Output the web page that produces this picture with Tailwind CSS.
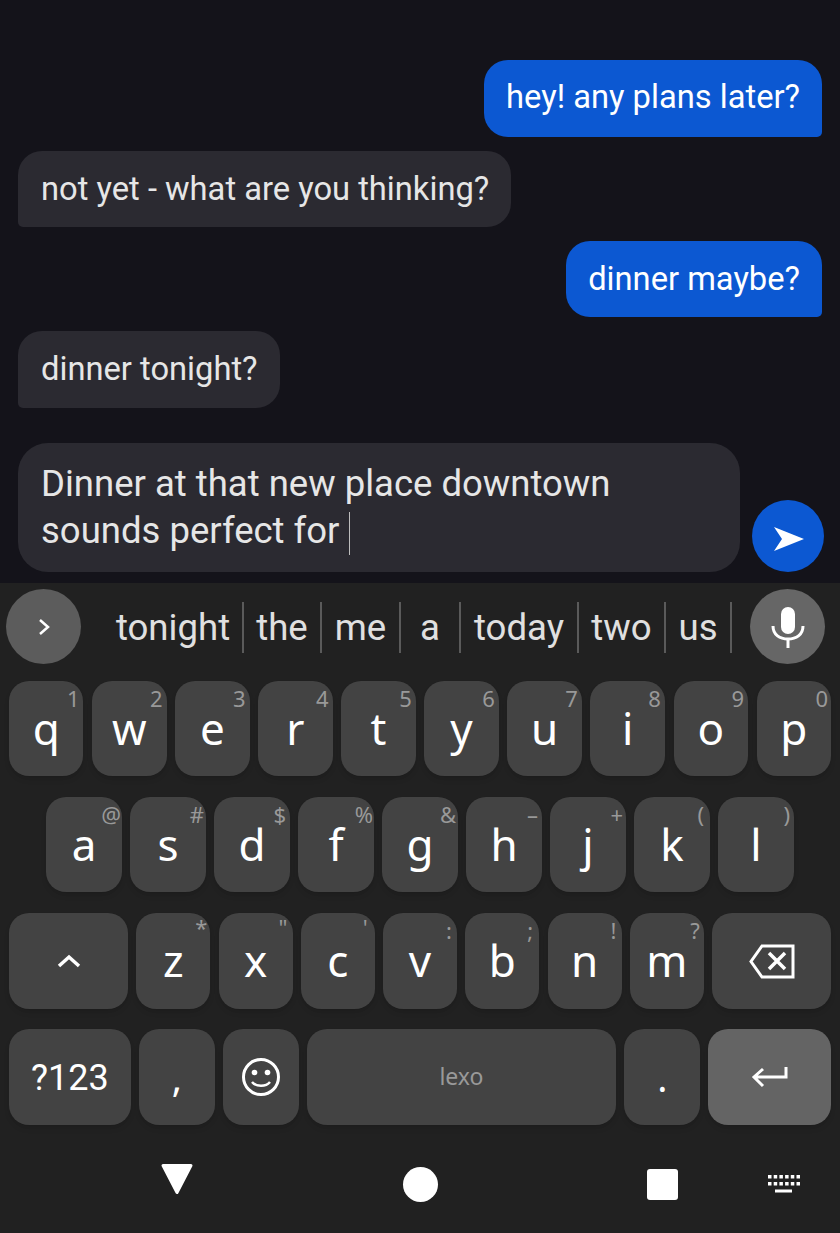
<!DOCTYPE html>
<html lang="en">
  <head>
    <meta charset="UTF-8" />
    <title>Chat</title>
    <script src="https://cdn.jsdelivr.net/npm/@tailwindcss/browser@4"></script>
  </head>
  <body class="bg-[#14131a] font-['Roboto',sans-serif] overflow-hidden">
    <div class="w-[840px] h-[1233px] flex flex-col">
      <!-- Messages -->
      <main class="h-[583px] flex flex-col pl-[18px] pr-[16px] pt-[60px]">
        <div class="flex flex-col gap-[14px] pr-[2px]">
          <div class="self-end h-[77px] flex items-center px-[22px] pb-[1px] rounded-[24px] rounded-br-[5px] bg-[#0c58d2] text-white text-[32.7px]">hey! any plans later?</div>
          <div class="self-start h-[76px] flex items-center pl-[23px] pr-[22px] pt-[1px] rounded-[24px] rounded-bl-[5px] bg-[#2b2a31] text-[#e6e6e6] text-[32.7px]">not yet - what are you thinking?</div>
          <div class="self-end h-[76px] flex items-center px-[22px] pt-[1px] rounded-[24px] rounded-br-[5px] bg-[#0c58d2] text-white text-[32.7px]">dinner maybe?</div>
          <div class="self-start h-[77px] flex items-center pl-[23px] pr-[22px] pt-[1px] rounded-[24px] rounded-bl-[5px] bg-[#2b2a31] text-[#e6e6e6] text-[32.7px]">dinner tonight?</div>
        </div>
        <div class="mt-[35px] flex items-end">
          <div class="w-[722px] h-[129px] pl-[23px] pt-[17px] rounded-[30px] bg-[#2b2a31] text-[#e6e6e6] text-[36.5px] leading-[47px]">
            Dinner at that new place downtown<br />sounds perfect for <span class="inline-block w-px h-[43px] bg-[#bdbdbd] align-middle"></span>
          </div>
          <button class="ml-[12px] w-[72px] h-[72px] rounded-full bg-[#0c58d2] flex items-center justify-center">
            <svg width="32" height="26" viewBox="0 0 32 26" class="ml-[1px] mt-[5px]"><path d="M1 1 L31 13 L1 25 L9 13 Z" fill="#fff" /></svg>
          </button>
        </div>
      </main>

      <!-- Keyboard -->
      <section class="flex-1 bg-[#212121] font-['Noto_Sans',sans-serif]">
        <div class="h-[87px] mb-[11px] flex items-center pl-[6px] pr-[15px] font-['Roboto',sans-serif] text-[36.6px] text-[#e0e0e0]">
          <div class="w-[75px] h-[75px] rounded-full bg-[#5c5c5c] flex items-center justify-center">
            <svg width="12" height="18" viewBox="0 0 12 18"><path d="M2 2 L10 9 L2 16" fill="none" stroke="#fff" stroke-width="2.5" /></svg>
          </div>
          <div class="ml-[21px] mt-[2px] flex items-center h-[51px] flex-1">
            <div class="h-[51px] w-[142px] flex items-center justify-center border-r-2 border-[#5a5a5a] pl-[2px] pt-[2px]">tonight</div>
            <div class="h-[51px] w-[78px] flex items-center justify-center border-r-2 border-[#5a5a5a] pt-[2px]">the</div>
            <div class="h-[51px] w-[79px] flex items-center justify-center border-r-2 border-[#5a5a5a] pt-[2px]">me</div>
            <div class="h-[51px] w-[60px] flex items-center justify-center border-r-2 border-[#5a5a5a] pt-[2px]">a</div>
            <div class="h-[51px] w-[118px] flex items-center justify-center border-r-2 border-[#5a5a5a] pt-[2px]">today</div>
            <div class="h-[51px] w-[87px] flex items-center justify-center border-r-2 border-[#5a5a5a] pt-[2px]">two</div>
            <div class="h-[51px] w-[66px] flex items-center justify-center border-r-2 border-[#5a5a5a] pt-[2px]">us</div>
          </div>
          <div class="w-[75px] h-[75px] rounded-full bg-[#666666] flex items-center justify-center">
            <svg width="34" height="42" viewBox="0 0 34 42"><rect x="10" y="1" width="14" height="27" rx="7" fill="#fff" /><path d="M2 20 C2 29 9 33 17 33 C25 33 32 29 32 20" fill="none" stroke="#fff" stroke-width="3" /><path d="M17 32 V42" stroke="#fff" stroke-width="3" /></svg>
          </div>
        </div>

        <!-- Row 1 -->
        <div class="flex gap-[8.6px] px-[9px] text-white text-[44px]">
          <div class="relative flex-1 h-[95px] rounded-[20px] bg-[#434343] shadow-md flex justify-center items-center pb-[2px]">q<span class="absolute top-[1px] right-[4px] text-[22px] text-[#999]">1</span></div>
          <div class="relative flex-1 h-[95px] rounded-[20px] bg-[#434343] shadow-md flex justify-center items-center pb-[2px]">w<span class="absolute top-[1px] right-[4px] text-[22px] text-[#999]">2</span></div>
          <div class="relative flex-1 h-[95px] rounded-[20px] bg-[#434343] shadow-md flex justify-center items-center pb-[2px]">e<span class="absolute top-[1px] right-[4px] text-[22px] text-[#999]">3</span></div>
          <div class="relative flex-1 h-[95px] rounded-[20px] bg-[#434343] shadow-md flex justify-center items-center pb-[2px]">r<span class="absolute top-[1px] right-[4px] text-[22px] text-[#999]">4</span></div>
          <div class="relative flex-1 h-[95px] rounded-[20px] bg-[#434343] shadow-md flex justify-center items-center pb-[2px]">t<span class="absolute top-[1px] right-[4px] text-[22px] text-[#999]">5</span></div>
          <div class="relative flex-1 h-[95px] rounded-[20px] bg-[#434343] shadow-md flex justify-center items-center pb-[2px]">y<span class="absolute top-[1px] right-[4px] text-[22px] text-[#999]">6</span></div>
          <div class="relative flex-1 h-[95px] rounded-[20px] bg-[#434343] shadow-md flex justify-center items-center pb-[2px]">u<span class="absolute top-[1px] right-[4px] text-[22px] text-[#999]">7</span></div>
          <div class="relative flex-1 h-[95px] rounded-[20px] bg-[#434343] shadow-md flex justify-center items-center pb-[2px]">i<span class="absolute top-[1px] right-[4px] text-[22px] text-[#999]">8</span></div>
          <div class="relative flex-1 h-[95px] rounded-[20px] bg-[#434343] shadow-md flex justify-center items-center pb-[2px]">o<span class="absolute top-[1px] right-[4px] text-[22px] text-[#999]">9</span></div>
          <div class="relative flex-1 h-[95px] rounded-[20px] bg-[#434343] shadow-md flex justify-center items-center pb-[2px]">p<span class="absolute top-[1px] right-[3px] text-[22px] text-[#999]">0</span></div>
        </div>

        <!-- Row 2 -->
        <div class="mt-[21px] flex gap-2 pl-[46px] text-white text-[44px]">
          <div class="relative w-[76px] h-[95px] rounded-[20px] bg-[#434343] shadow-md flex justify-center items-center pb-[2px]">a<span class="absolute top-[1px] right-[1px] text-[22px] text-[#999]">@</span></div>
          <div class="relative w-[76px] h-[95px] rounded-[20px] bg-[#434343] shadow-md flex justify-center items-center pb-[2px]">s<span class="absolute top-[1px] right-[2px] text-[22px] text-[#999]">#</span></div>
          <div class="relative w-[76px] h-[95px] rounded-[20px] bg-[#434343] shadow-md flex justify-center items-center pb-[2px]">d<span class="absolute top-[1px] right-[4px] text-[22px] text-[#999]">$</span></div>
          <div class="relative w-[76px] h-[95px] rounded-[20px] bg-[#434343] shadow-md flex justify-center items-center pb-[2px]">f<span class="absolute top-[1px] right-[1px] text-[22px] text-[#999]">%</span></div>
          <div class="relative w-[76px] h-[95px] rounded-[20px] bg-[#434343] shadow-md flex justify-center items-center pb-[2px]">g<span class="absolute top-[1px] right-[2px] text-[22px] text-[#999]">&amp;</span></div>
          <div class="relative w-[76px] h-[95px] rounded-[20px] bg-[#434343] shadow-md flex justify-center items-center pb-[2px]">h<span class="absolute top-[1px] right-[4px] text-[22px] text-[#999]">–</span></div>
          <div class="relative w-[76px] h-[95px] rounded-[20px] bg-[#434343] shadow-md flex justify-center items-center pb-[2px]">j<span class="absolute top-[1px] right-[3px] text-[22px] text-[#999]">+</span></div>
          <div class="relative w-[76px] h-[95px] rounded-[20px] bg-[#434343] shadow-md flex justify-center items-center pb-[2px]">k<span class="absolute top-[1px] right-[6px] text-[22px] text-[#999]">(</span></div>
          <div class="relative w-[76px] h-[95px] rounded-[20px] bg-[#434343] shadow-md flex justify-center items-center pb-[2px]">l<span class="absolute top-[1px] right-[4px] text-[22px] text-[#999]">)</span></div>
        </div>

        <!-- Row 3 -->
        <div class="mt-[21px] flex gap-[8.3px] px-[9px] text-white text-[44px]">
          <div class="w-[119px] h-[96px] rounded-[20px] bg-[#434343] shadow-md flex justify-center items-center">
            <svg width="24" height="14" viewBox="0 0 24 14"><path d="M2 12 L12 3 L22 12" fill="none" stroke="#fff" stroke-width="3.5" /></svg>
          </div>
          <div class="relative flex-1 h-[96px] rounded-[20px] bg-[#434343] shadow-md flex justify-center items-center pb-[2px]">z<span class="absolute top-[-2px] right-[3px] text-[22px] text-[#999]">*</span></div>
          <div class="relative flex-1 h-[96px] rounded-[20px] bg-[#434343] shadow-md flex justify-center items-center pb-[2px]">x<span class="absolute top-[-2px] right-[5px] text-[22px] text-[#999]">"</span></div>
          <div class="relative flex-1 h-[96px] rounded-[20px] bg-[#434343] shadow-md flex justify-center items-center pb-[2px]">c<span class="absolute top-[-2px] right-[7px] text-[22px] text-[#999]">'</span></div>
          <div class="relative flex-1 h-[96px] rounded-[20px] bg-[#434343] shadow-md flex justify-center items-center pb-[2px]">v<span class="absolute top-[1px] right-[5px] text-[22px] text-[#999]">:</span></div>
          <div class="relative flex-1 h-[96px] rounded-[20px] bg-[#434343] shadow-md flex justify-center items-center pb-[2px]">b<span class="absolute top-[1px] right-[6px] text-[22px] text-[#999]">;</span></div>
          <div class="relative flex-1 h-[96px] rounded-[20px] bg-[#434343] shadow-md flex justify-center items-center pb-[2px]">n<span class="absolute top-[1px] right-[5px] text-[22px] text-[#999]">!</span></div>
          <div class="relative flex-1 h-[96px] rounded-[20px] bg-[#434343] shadow-md flex justify-center items-center pb-[2px]">m<span class="absolute top-[1px] right-[4px] text-[22px] text-[#999]">?</span></div>
          <div class="w-[119px] h-[96px] rounded-[20px] bg-[#434343] shadow-md flex justify-center items-center">
            <svg width="46" height="35" viewBox="0 0 46 35"><path d="M13 2 H44 V33 H13 L2 17.5 Z" fill="none" stroke="#fff" stroke-width="3" /><path d="M20 9 L36 25 M36 9 L20 25" stroke="#fff" stroke-width="3.5" /></svg>
          </div>
        </div>

        <!-- Row 4 -->
        <div class="mt-[20px] flex gap-2 px-[9px] text-white">
          <div class="w-[122px] h-[96px] rounded-[20px] bg-[#434343] shadow-md flex justify-center items-center pt-[1px] font-['Roboto',sans-serif] text-[36px]">?123</div>
          <div class="w-[76px] h-[96px] rounded-[20px] bg-[#434343] shadow-md flex justify-center items-center text-[38px]">,</div>
          <div class="w-[76px] h-[96px] rounded-[20px] bg-[#434343] shadow-md flex justify-center items-center">
            <svg width="38" height="38" viewBox="0 0 38 38"><circle cx="19" cy="19" r="17.5" fill="none" stroke="#fff" stroke-width="3" /><circle cx="12.5" cy="14.5" r="2.8" fill="#fff" /><circle cx="25.5" cy="14.5" r="2.8" fill="#fff" /><path d="M10 24 C14 29 24 29 28 24" fill="none" stroke="#fff" stroke-width="2.5" /></svg>
          </div>
          <div class="w-[310px] h-[96px] rounded-[20px] bg-[#434343] shadow-md flex justify-center items-center pb-[2px] text-[23px] text-[#999]">lexo</div>
          <div class="w-[76px] h-[96px] rounded-[20px] bg-[#434343] shadow-md flex justify-center items-center text-[38px]">.</div>
          <div class="w-[123px] h-[96px] rounded-[20px] bg-[#646464] shadow-md flex justify-center items-center">
            <svg width="37" height="22" viewBox="0 0 37 22"><path d="M35 1 V11 H4 M12 3 L3 11 L12 20" fill="none" stroke="#fff" stroke-width="3" /></svg>
          </div>
        </div>

        <!-- Nav bar -->
        <div class="mt-[39px] h-[40px] flex items-center pl-[160px]">
          <svg class="mb-[10px]" width="34" height="32" viewBox="0 0 34 32"><path d="M3 2.500 H31 L17 29.500 Z" fill="#fff" stroke="#fff" stroke-width="3" stroke-linejoin="round" /></svg>
          <div class="ml-[209px] w-[35px] h-[35px] rounded-full bg-white"></div>
          <div class="ml-[209px] w-[31px] h-[31px] rounded-[3px] bg-white"></div>
          <svg class="ml-[90px]" width="32" height="18" viewBox="0 0 32 18" fill="#fff"><path d="M0 0h3.500v3.500H0zM5.700 0h3.500v3.500H5.700zM11.400 0h3.500v3.500h-3.500zM17.100 0h3.500v3.500h-3.500zM22.800 0h3.500v3.500h-3.500zM28.500 0h3.500v3.500h-3.500zM0 7h3.500v3.500H0zM5.700 7h3.500v3.500H5.700zM11.400 7h3.500v3.500h-3.500zM17.100 7h3.500v3.500h-3.500zM22.800 7h3.500v3.500h-3.500zM28.500 7h3.500v3.500h-3.500zM7 14.500h17v3H7z" /></svg>
        </div>
      </section>
    </div>
  </body>
</html>
